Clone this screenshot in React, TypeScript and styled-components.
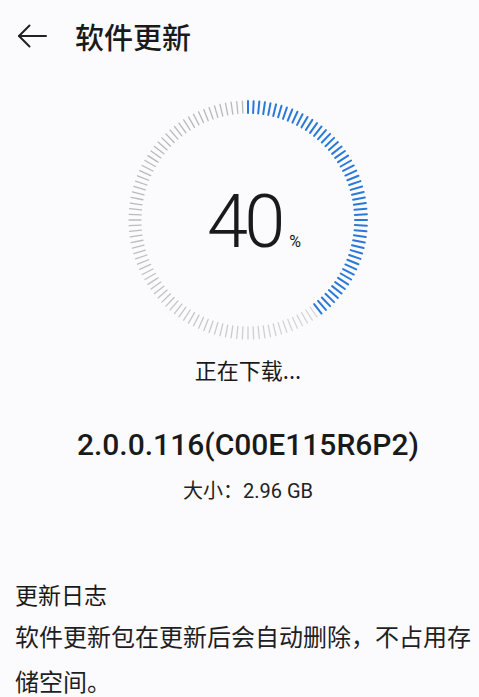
import React from 'react';
import styled, { createGlobalStyle } from 'styled-components';

const GlobalStyle = createGlobalStyle`
  html, body {
    margin: 0;
    padding: 0;
    background: #fbfafd;
  }
  body {
    font-family: Roboto, "Noto Sans CJK SC", sans-serif;
    color: #1a1a1a;
  }
`;

const Page = styled.div`
  width: 479px;
  min-height: 697px;
  overflow: hidden;
`;

const Header = styled.header`
  height: 72px;
  display: flex;
  align-items: center;
  padding-left: 17px;
  gap: 28px;
`;

const BackButton = styled.button`
  border: 0;
  background: none;
  padding: 0;
  width: 30px;
  height: 24px;
  display: flex;
  align-items: center;
  color: #222;
`;

const Title = styled.h1`
  margin: 0;
  font-family: "Noto Sans CJK SC", sans-serif;
  font-size: 29px;
  font-weight: 500;
  line-height: 36px;
  color: #1a1a1a;
`;

const Center = styled.section`
  display: flex;
  flex-direction: column;
  align-items: center;
  padding-left: 17px;
`;

const RingWrap = styled.div`
  margin-top: 28px;
  width: 240px;
  height: 240px;
  display: grid;
  place-items: center;

  & > * {
    grid-area: 1 / 1;
  }
`;

const Percent = styled.div`
  display: flex;
  align-items: baseline;
  padding-top: 3px;
  padding-left: 12px;
  color: #1a1a1a;
`;

const Big = styled.span`
  font-family: Roboto, sans-serif;
  font-weight: 300;
  font-size: 74px;
  line-height: 1;
  letter-spacing: -4px;
`;

const Small = styled.span`
  font-family: Roboto, sans-serif;
  font-size: 16px;
  margin-left: 8px;
`;

const Status = styled.p`
  margin: 13px 0 0;
  font-family: "Noto Sans CJK SC", sans-serif;
  font-size: 22px;
  line-height: 32px;
  color: #1a1a1a;
`;

const Version = styled.h2`
  margin: 40px 0 0;
  font-size: 30px;
  font-weight: 500;
  line-height: 40px;
  color: #1a1a1a;
`;

const Size = styled.p`
  margin: 12px 0 0;
  font-size: 20px;
  line-height: 28px;
  color: #222;
`;

const Log = styled.section`
  margin-top: 71px;
  padding: 0 4px 0 15px;
  font-family: "Noto Sans CJK SC", sans-serif;
`;

const LogTitle = styled.h3`
  margin: 0;
  font-size: 23px;
  font-weight: 400;
  line-height: 36px;
  color: #1a1a1a;
`;

const LogText = styled.p`
  margin: 1px 0 0;
  font-size: 24px;
  line-height: 45px;
  color: #1f1f1f;
`;

const TICKS = 132;
const R_OUT = 119;
const R_IN = 107;

const Ring = ({ progress }: { progress: number }) => {
  const done = Math.round(TICKS * progress);
  const ticks = Array.from({ length: TICKS }, (_, i) => {
    const a = (i / TICKS) * Math.PI * 2;
    const s = Math.sin(a);
    const c = Math.cos(a);
    const active = i < done;
    const fade = 0.5 + 0.45 * Math.abs(Math.cos(a / 2 + 0.3));
    return (
      <line
        key={i}
        x1={120 + s * R_IN}
        y1={120 - c * R_IN}
        x2={120 + s * R_OUT}
        y2={120 - c * R_OUT}
        stroke={active ? '#2a79d8' : '#b4b4b4'}
        strokeOpacity={active ? 1 : fade}
        strokeWidth={active ? 2 : 1.3}
        strokeLinecap="round"
      />
    );
  });
  return (
    <svg width="240" height="240" viewBox="0 0 240 240">
      {ticks}
    </svg>
  );
};

const App = () => {
  return (
    <Page>
      <GlobalStyle />
      <Header>
        <BackButton aria-label="返回">
          <svg width="30" height="24" viewBox="0 0 30 24" fill="none" stroke="currentColor" strokeWidth="2" strokeLinecap="round" strokeLinejoin="round">
            <path d="M2 12H29" />
            <path d="M12.5 1.5L2 12l10.5 10.5" />
          </svg>
        </BackButton>
        <Title>软件更新</Title>
      </Header>

      <Center>
        <RingWrap>
          <Ring progress={0.4} />
          <Percent>
            <Big>40</Big>
            <Small>%</Small>
          </Percent>
        </RingWrap>
        <Status>正在下载...</Status>
        <Version>2.0.0.116(C00E115R6P2)</Version>
        <Size>大小：2.96 GB</Size>
      </Center>

      <Log>
        <LogTitle>更新日志</LogTitle>
        <LogText>软件更新包在更新后会自动删除，不占用存储空间。</LogText>
      </Log>
    </Page>
  );
};

export default App;
